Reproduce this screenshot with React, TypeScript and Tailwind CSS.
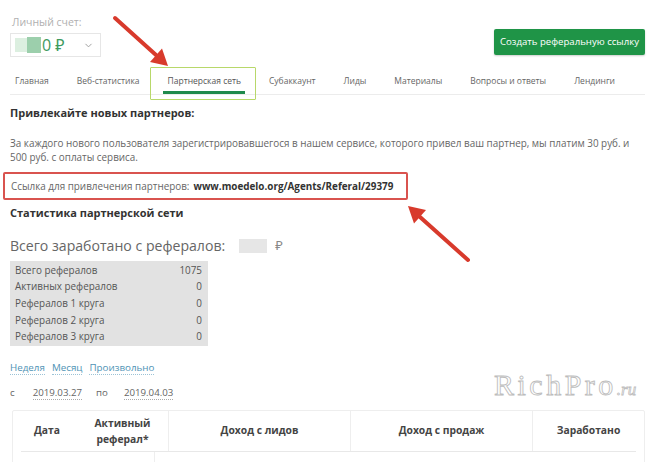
import { ChevronDown } from "lucide-react";

const tabs = [
  "Главная",
  "Веб-статистика",
  "Партнерская сеть",
  "Субаккаунт",
  "Лиды",
  "Материалы",
  "Вопросы и ответы",
  "Лендинги",
];

const stats: [string, string][] = [
  ["Всего рефералов", "1075"],
  ["Активных рефералов", "0"],
  ["Рефералов 1 круга", "0"],
  ["Рефералов 2 круга", "0"],
  ["Рефералов 3 круга", "0"],
];

export default function App() {
  return (
    <div
      className="relative w-[650px] h-[462px] overflow-hidden bg-white whitespace-nowrap"
      style={{ fontFamily: '"Open Sans", "Noto Sans", sans-serif' }}
    >
      <div className="pl-[10px] pr-[5px] pt-[14px]">
        {/* Balance + create link button */}
        <div className="flex items-start justify-between">
          <div className="flex flex-col">
            <span className="text-[10.5px] text-[#b0b0b0] leading-[16px] pl-[2px]">Личный счет:</span>
            <div className="mt-[3px] w-[91px] h-[24px] border border-[#e6e6e6] flex items-center pl-[4px] pr-[6px]">
              <div className="w-[12px] h-[14px] bg-[#dcefe0]" />
              <div className="w-[14px] h-[16px] bg-[#9ccfac]" />
              <span className="text-[16px] text-[#3d9a5e] leading-none ml-[1px]">0 ₽</span>
              <ChevronDown size={11} className="ml-auto text-[#999]" />
            </div>
          </div>
          <button className="mt-[15px] w-[151px] h-[26px] bg-[#1f9447] text-white text-[9.6px] rounded-[2px] shadow-[0_1px_2px_rgba(0,0,0,0.2)]">
            Создать реферальную ссылку
          </button>
        </div>

        {/* Tabs */}
        <div className="mt-[15px] flex gap-[28px] pl-[5px] border-b border-[#ececec] h-[23px] items-start">
          {tabs.map((t) =>
            t === "Партнерская сеть" ? (
              <div key={t} className="relative text-[8.5px] text-[#555] leading-[14px] pt-[2px]">
                {t}
                <div className="absolute -left-[5px] -right-[4px] top-[19px] h-[3px] bg-[#1f8a4c]" />
                <div className="absolute -left-[18px] -right-[15px] -top-[5px] h-[33px] border border-[#b8d86a] rounded-[1px]" />
              </div>
            ) : (
              <div key={t} className="text-[8.5px] text-[#666] leading-[14px] pt-[2px]">
                {t}
              </div>
            )
          )}
        </div>

        {/* Attract partners */}
        <h2 className="mt-[10px] text-[11px] font-bold text-[#333] leading-[16px]">Привлекайте новых партнеров:</h2>
        <p className="mt-[15px] text-[9.9px] text-[#666] leading-[14px] whitespace-normal">
          За каждого нового пользователя зарегистрировавшегося в нашем сервисе, которого привел ваш партнер, мы платим 30 руб. и 500 руб. с оплаты сервиса.
        </p>
        <div className="-ml-[7px] mt-[8px] w-[405px] h-[28px] border-2 border-[#d9534f] rounded-[2px] flex items-center pl-[6px] text-[9.9px]">
          <span className="text-[#666]">Ссылка для привлечения партнеров:</span>
          <span className="ml-[4px] font-bold text-[#333]">www.moedelo.org/Agents/Referal/29379</span>
        </div>

        <h2 className="mt-[5px] text-[11px] font-bold text-[#333] leading-[16px]">Статистика партнерской сети</h2>

        <div className="mt-[14px] flex items-center">
          <span className="text-[14.1px] text-[#666] leading-[22px]">Всего заработано с рефералов:</span>
          <div className="ml-[14px] w-[28px] h-[14px] bg-[#e6e6e6]" />
          <span className="ml-[8px] text-[13px] text-[#888]">₽</span>
        </div>

        {/* Stats table */}
        <div className="mt-[4px] w-[198px] bg-[#e2e2e2] py-[1px]">
          {stats.map(([k, v]) => (
            <div key={k} className="flex justify-between h-[16.6px] items-center pl-[5px] pr-[6px] text-[9.9px] text-[#555]">
              <span>{k}</span>
              <span>{v}</span>
            </div>
          ))}
        </div>

        {/* Period links */}
        <div className="mt-[15px] flex gap-[7px] text-[9.8px] text-[#4f93b5]">
          <span className="border-b border-dotted border-[#9cc3d6] leading-[13px]">Неделя</span>
          <span className="border-b border-dotted border-[#9cc3d6] leading-[13px]">Месяц</span>
          <span className="border-b border-dotted border-[#9cc3d6] leading-[13px]">Произвольно</span>
        </div>

        <div className="mt-[11px] flex items-center text-[9.7px] text-[#666]">
          <span>с</span>
          <span className="ml-[18px] border-b border-dotted border-[#aaa] leading-[13px]">2019.03.27</span>
          <span className="ml-[14px]">по</span>
          <span className="ml-[16px] border-b border-dotted border-[#aaa] leading-[13px]">2019.04.03</span>
        </div>

        {/* Earnings table */}
        <div className="mt-[9px] ml-[2px] border border-[#eeeeee] rounded-[2px]">
          <div className="grid grid-cols-[68px_87px_182px_182px_1fr] text-[10.3px] font-bold text-[#444] h-[40px]">
            <div className="flex items-center justify-center">Дата</div>
            <div className="flex items-center justify-center text-center leading-[16px] -ml-[4px]">
              Активный
              <br />
              реферал*
            </div>
            <div className="flex items-center justify-center border-l border-[#eee]">Доход с лидов</div>
            <div className="flex items-center justify-center border-l border-[#eee]">Доход с продаж</div>
            <div className="flex items-center justify-center border-l border-[#eee]">Заработано</div>
          </div>
          <div className="ml-[8px] mr-[8px] border-t border-[#e8e8e8] grid grid-cols-[133px_1fr] h-[30px]">
            <div />
            <div className="border-l border-[#eee]" />
          </div>
        </div>
      </div>

      {/* Watermark */}
      <div className="absolute left-[494px] top-[362px] flex items-baseline" style={{ fontFamily: '"Liberation Serif", serif' }}>
        <span className="text-[30px] text-transparent [-webkit-text-stroke:0.9px_#bdbdbd] tracking-[3.5px]">RichPro</span>
        <span className="text-[17px] italic text-transparent [-webkit-text-stroke:0.8px_#bdbdbd]">.ru</span>
      </div>

      {/* Annotation arrows */}
      <svg className="absolute inset-0 pointer-events-none" width="650" height="462">
        <line x1="115" y1="18" x2="156" y2="55" stroke="#d83a2c" strokeWidth="4" strokeLinecap="round" />
        <polygon points="168,66 150,62 162,48.6" fill="#d83a2c" />
        <line x1="468" y1="260" x2="420" y2="217" stroke="#d83a2c" strokeWidth="4" strokeLinecap="round" />
        <polygon points="408,206 426,210 414,223.4" fill="#d83a2c" />
      </svg>
    </div>
  );
}
